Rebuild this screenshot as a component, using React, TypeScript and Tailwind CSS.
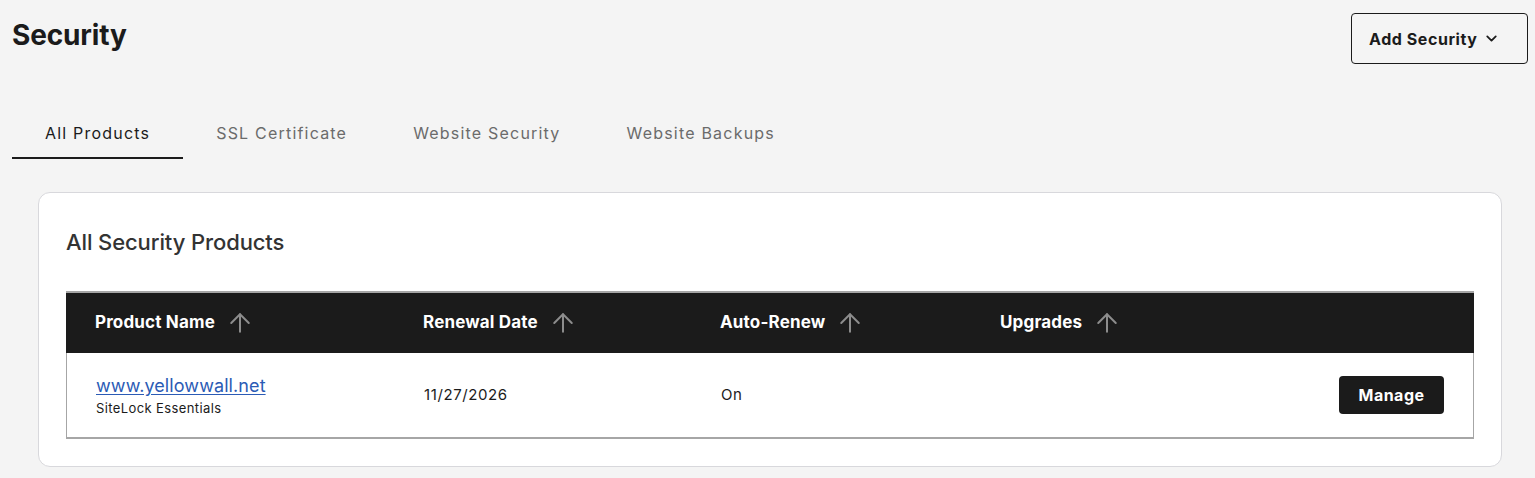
import React from 'react';
import { ChevronDown, ArrowUp } from 'lucide-react';

const tabs = ['All Products', 'SSL Certificate', 'Website Security', 'Website Backups'];
const columns = ['Product Name', 'Renewal Date', 'Auto-Renew', 'Upgrades'];

export default function App() {
  return (
    <div className="min-h-[478px] bg-[#f4f4f4] text-[#1b1b1b] font-['Inter','Liberation_Sans',sans-serif]">
      {/* Header */}
      <div className="flex items-start justify-between pl-3 pr-[7px] pt-[13px]">
        <h1 className="mt-[4px] text-[28px] font-bold leading-[36px] tracking-[-0.005em]">Security</h1>
        <button className="flex h-[51px] w-[177px] items-center gap-[6px] rounded-[4px] border border-[#1b1b1b] bg-[#f4f4f4] pl-[17px] text-[16px] font-bold tracking-[0.035em]">
          Add Security
          <ChevronDown size={17} strokeWidth={2.5} />
        </button>
      </div>

      {/* Tabs */}
      <div className="mt-[57px] flex pl-3">
        {tabs.map((t, i) => (
          <div
            key={t}
            className={
              i === 0
                ? 'border-b-2 border-[#1b1b1b] px-[33px] pb-[12px] text-[16px] leading-[24px] tracking-[0.075em] text-[#1b1b1b]'
                : 'border-b-2 border-transparent px-[33px] pb-[12px] text-[16px] leading-[24px] tracking-[0.075em] text-[#6b6b6b]'
            }
          >
            {t}
          </div>
        ))}
      </div>

      {/* Card */}
      <div className="ml-[38px] mr-[33px] mt-[33px] rounded-[12px] border border-[#d8d8dc] bg-white px-[27px] pb-[27px] pt-[35px]">
        <h2 className="text-[22px] font-medium leading-[28px] tracking-[-0.005em] text-[#333333]">All Security Products</h2>

        <div className="mt-[35px] border-t-2 border-[#a6a6a6]">
          <div className="grid h-[60px] grid-cols-[328px_297px_280px_1fr] items-center bg-[#1b1b1b] text-white">
            {columns.map((c) => (
              <div key={c} className="flex items-center gap-[10px] pl-[29px] text-[17px] font-bold tracking-[0.01em]">
                {c}
                <ArrowUp size={30} strokeWidth={1.6} className="text-[#8c8c8c]" />
              </div>
            ))}
          </div>
          <div className="grid h-[86px] grid-cols-[328px_297px_280px_1fr] items-center border-x border-b-2 border-[#a6a6a6] text-[15px]">
            <div className="pl-[29px] pt-[1px]">
              <a href="#" className="text-[18px] leading-[22px] tracking-[0.005em] text-[#2b5bb5] underline underline-offset-2">
                www.yellowwall.net
              </a>
              <div className="mt-[2px] text-[13px] leading-[16px] tracking-[0.03em]">SiteLock Essentials</div>
            </div>
            <div className="pl-[29px] tracking-[0.04em]">11/27/2026</div>
            <div className="pl-[29px] tracking-[0.04em]">On</div>
            <div className="flex justify-end pr-[29px]">
              <button className="h-[38px] w-[105px] rounded-[4px] bg-[#1b1b1b] text-[16px] font-bold tracking-[0.03em] text-white">
                Manage
              </button>
            </div>
          </div>
        </div>
      </div>
    </div>
  );
}
